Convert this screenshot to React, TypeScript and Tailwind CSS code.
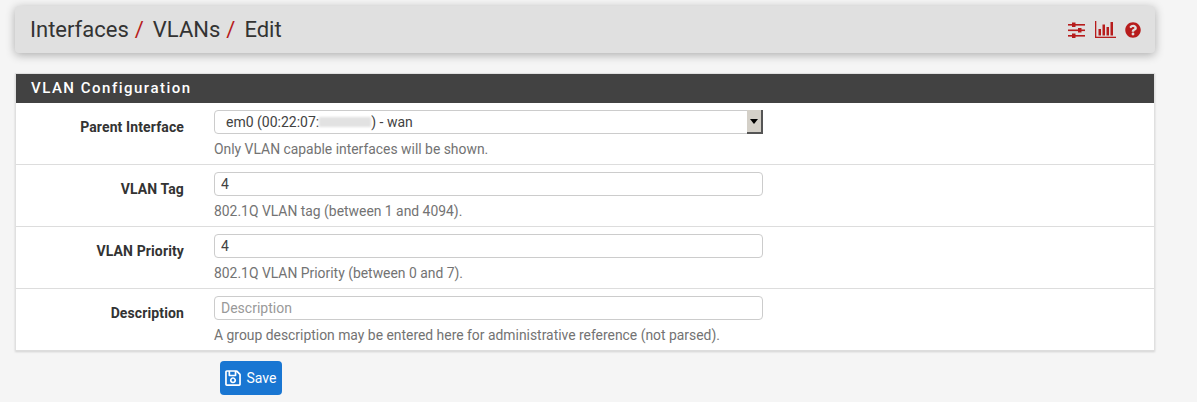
import { FaQuestionCircle, FaRegSave } from "react-icons/fa";

const inputCls = "block h-[24px] w-[549px] rounded-[4px] border border-[#ccc] bg-white px-[6px] text-[14px] leading-[22px] text-[#424242]";

function Row({ label, help, children }: { label: string; help: string; children: React.ReactNode }) {
  return (
    <div className="flex h-[62px] border-b border-[#ddd] pt-[7px]">
      <div className="w-[168px] pt-[7px] text-right text-[14px] leading-[20px] font-bold tracking-[0.12px] text-[#333]">{label}</div>
      <div className="ml-[30px]">
        {children}
        <div className="mt-[5px] text-[13.9px] leading-[20px] text-[#737373]">{help}</div>
      </div>
    </div>
  );
}

export default function App() {
  return (
    <div className="h-[402px] overflow-hidden bg-[#f5f5f5] pt-[6px] pr-[42px] pl-[15px] font-['Roboto',sans-serif]">
      <div className="flex h-[47px] items-center justify-between rounded-[4px] bg-[#e0e0e0] pr-[14px] pl-[15px] shadow-[0_2px_10px_rgba(0,0,0,0.3)]">
        <div className="text-[22px] leading-[30px] text-[#333]">
          Interfaces<span className="ml-[6px] mr-[9px] text-[#b71c1c]">/</span>VLANs<span className="ml-[6px] mr-[9px] text-[#b71c1c]">/</span>Edit
        </div>
        <div className="flex items-center gap-[9px] text-[#b71c1c]">
          <svg width="18" height="16" viewBox="0 0 18 16" fill="currentColor">
            <rect x="0" y="2" width="17" height="1.6" />
            <rect x="4" y="0.5" width="3.5" height="4.5" />
            <rect x="0" y="7.5" width="17" height="1.6" />
            <rect x="10" y="6" width="3.5" height="4.5" />
            <rect x="0" y="13" width="17" height="1.6" />
            <rect x="4" y="11.5" width="3.5" height="4.5" />
          </svg>
          <svg width="21" height="17" viewBox="0 0 21 17" fill="currentColor">
            <rect x="0" y="0" width="1.3" height="17" />
            <rect x="0" y="15.7" width="21" height="1.3" />
            <rect x="3.5" y="8" width="2.5" height="6.5" />
            <rect x="7.5" y="3.5" width="2.5" height="11" />
            <rect x="11.5" y="6" width="2.5" height="8.5" />
            <rect x="15.5" y="1" width="2.5" height="13.5" />
          </svg>
          <FaQuestionCircle size={16} />
        </div>
      </div>
      <div className="mt-[20px] border border-b-0 border-[#e0e0e0] bg-white shadow-[0_1px_2px_rgba(0,0,0,0.15)]">
        <div className="h-[29px] bg-[#424242] pl-[15px] text-[15px] leading-[29px] font-medium tracking-[1.5px] text-white">VLAN Configuration</div>
        <Row label="Parent Interface" help="Only VLAN capable interfaces will be shown.">
          <div className={inputCls + " relative flex items-center"}>
            <span className="pl-[5px]">em0 (00:22:07:</span>
            <span className="h-[10px] w-[52px] bg-[#e2e2e2] blur-[1px]" />
            <span>) - wan</span>
            <span className="absolute top-[-1px] right-[-1px] flex h-[24px] w-[16px] items-center justify-center border-r-2 border-b-2 border-[#555] bg-[#d4d0c8]">
              <span className="h-0 w-0 border-x-[4px] border-t-[5px] border-x-transparent border-t-black" />
            </span>
          </div>
        </Row>
        <Row label="VLAN Tag" help="802.1Q VLAN tag (between 1 and 4094).">
          <input className={inputCls} readOnly value="4" />
        </Row>
        <Row label="VLAN Priority" help="802.1Q VLAN Priority (between 0 and 7).">
          <input className={inputCls} readOnly value="4" />
        </Row>
        <Row label="Description" help="A group description may be entered here for administrative reference (not parsed).">
          <input className={inputCls + " placeholder:text-[#999]"} placeholder="Description" />
        </Row>
      </div>
      <button className="mt-[10px] ml-[205px] flex h-[34px] w-[62px] items-center justify-center gap-[5px] rounded-[4px] bg-[#1976d2] pr-[2px] text-[14px] text-white">
        <FaRegSave size={18} />
        Save
      </button>
    </div>
  );
}
